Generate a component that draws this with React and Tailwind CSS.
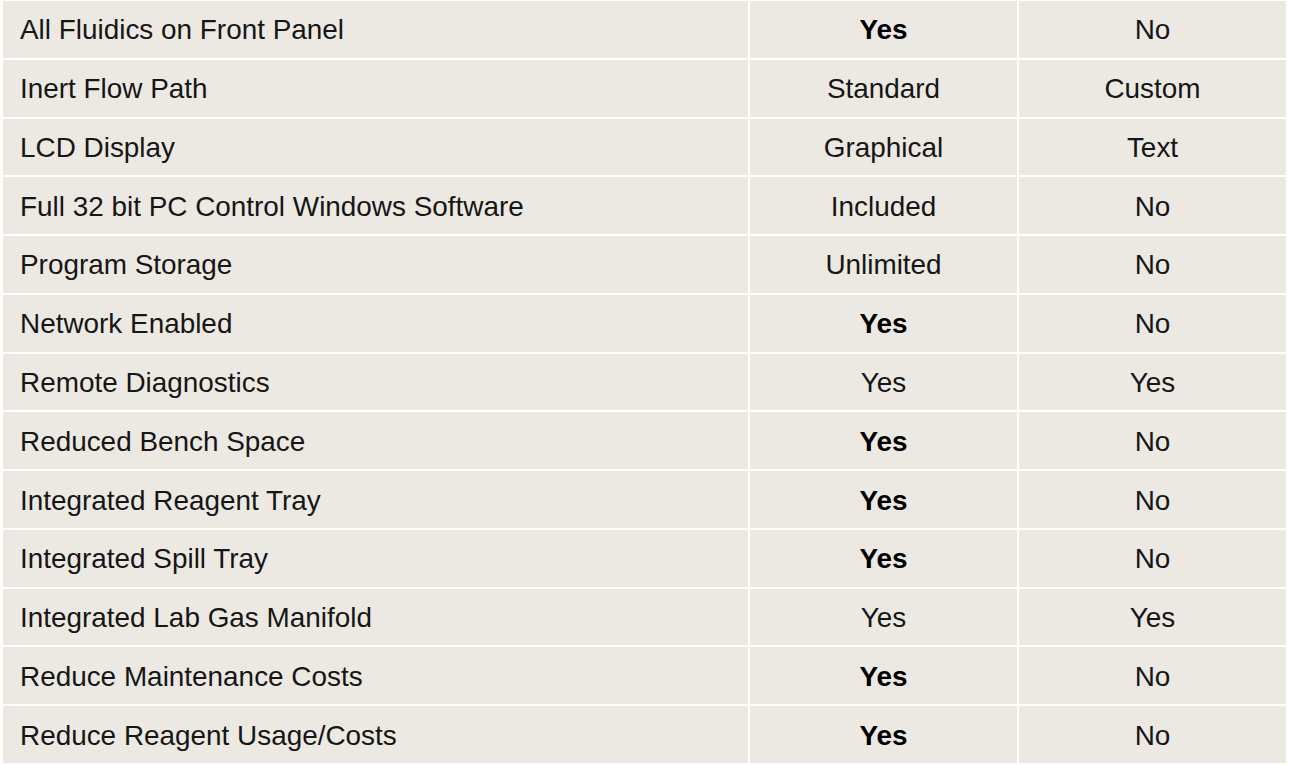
const rows = [
  ["All Fluidics on Front Panel", "Yes", true, "No"],
  ["Inert Flow Path", "Standard", false, "Custom"],
  ["LCD Display", "Graphical", false, "Text"],
  ["Full 32 bit PC Control Windows Software", "Included", false, "No"],
  ["Program Storage", "Unlimited", false, "No"],
  ["Network Enabled", "Yes", true, "No"],
  ["Remote Diagnostics", "Yes", false, "Yes"],
  ["Reduced Bench Space", "Yes", true, "No"],
  ["Integrated Reagent Tray", "Yes", true, "No"],
  ["Integrated Spill Tray", "Yes", true, "No"],
  ["Integrated Lab Gas Manifold", "Yes", false, "Yes"],
  ["Reduce Maintenance Costs", "Yes", true, "No"],
  ["Reduce Reagent Usage/Costs", "Yes", true, "No"],
];

export default function App() {
  return (
    <div
      className="w-[1289px] h-[765px] bg-white pl-[3px] pr-[3px] pt-[1px] overflow-hidden"
      style={{ fontFamily: '"Liberation Sans", Arial, sans-serif' }}
    >
      <div className="flex flex-col gap-[2px]">
        {rows.map(([label, mid, bold, right], i) => (
          <div key={i} className="grid grid-cols-[745px_267px_267px] gap-[2px] h-[56.77px]">
            <div className="bg-[#ECE9E3] flex items-center pl-[17px] pt-[2px] text-[27.9px] text-[#161616] leading-none">
              {label}
            </div>
            <div
              className={`bg-[#ECE9E3] flex items-center justify-center pt-[2px] text-[27.9px] leading-none ${
                bold ? "font-bold text-black" : "text-[#161616]"
              }`}
            >
              {mid}
            </div>
            <div className="bg-[#ECE9E3] flex items-center justify-center pt-[2px] text-[27.9px] text-[#161616] leading-none">
              {right}
            </div>
          </div>
        ))}
      </div>
    </div>
  );
}
